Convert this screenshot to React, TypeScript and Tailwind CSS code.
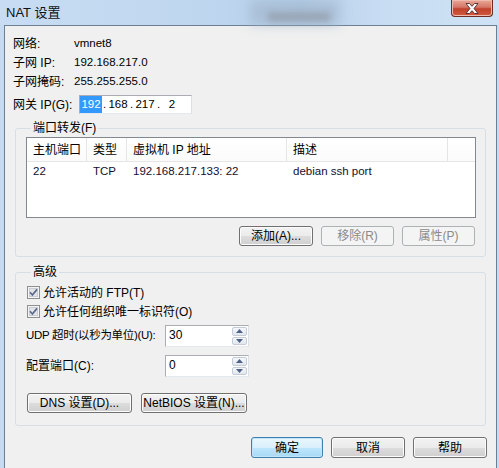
import React from "react";

const font = "font-['Liberation_Sans','Noto_Sans_CJK_SC',sans-serif]";

const WinButton = ({
  label,
  width,
  disabled = false,
  primary = false,
  height = "h-[20px]",
}: {
  label: string;
  width: string;
  disabled?: boolean;
  primary?: boolean;
  height?: string;
}) => {
  let cls =
    "flex items-center justify-center rounded-[3px] border text-[12px] leading-none whitespace-nowrap " +
    width +
    " " +
    height;
  if (disabled) {
    cls += " border-[#adb2b5] bg-[#f4f4f4] text-[#8a8a8a]";
  } else if (primary) {
    cls +=
      " border-[#3c7fb1] bg-[linear-gradient(#eaf6fd_0%,#d9f0fc_50%,#bee6fd_51%,#a7d9f5_100%)] text-black shadow-[inset_0_0_0_1px_#c4e5f6]";
  } else {
    cls +=
      " border-[#707070] bg-[linear-gradient(#f2f2f2_0%,#ebebeb_50%,#dddddd_51%,#cfcfcf_100%)] text-black shadow-[inset_0_0_0_1px_#fcfcfc]";
  }
  return <div className={cls}>{label}</div>;
};

const CheckBox = () => (
  <svg width="13" height="13" viewBox="0 0 13 13">
    <rect x="0.5" y="0.5" width="12" height="12" fill="#f4f4f4" stroke="#8e8f8f" />
    <rect x="2.5" y="2.5" width="8" height="8" fill="#e2e4e8" stroke="#c9ccd2" />
    <path d="M3 6.3 L5.4 9 L10 3.4" fill="none" stroke="#5a6a8c" strokeWidth="1.7" />
  </svg>
);

const SpinInput = ({ value }: { value: string }) => (
  <div className="flex h-[22px] w-[84px] border border-[#abadb3] border-r-[#dbdfe6] border-b-[#e3e9ef] bg-white">
    <div className="flex-1 pl-[3px] pt-[2px] text-[12px] leading-[14px]">{value}</div>
    <div className="flex w-[17px] flex-col gap-[1px] p-[1px]">
      <div className="flex flex-1 items-center justify-center rounded-[2px] border border-[#c5ccd6] bg-[linear-gradient(#f5f8fb,#e1e7ef)]">
        <svg width="7" height="4" viewBox="0 0 7 4">
          <path d="M0 4 L3.5 0 L7 4 Z" fill="#4d6185" />
        </svg>
      </div>
      <div className="flex flex-1 items-center justify-center rounded-[2px] border border-[#c5ccd6] bg-[linear-gradient(#f5f8fb,#e1e7ef)]">
        <svg width="7" height="4" viewBox="0 0 7 4">
          <path d="M0 0 L3.5 4 L7 0 Z" fill="#4d6185" />
        </svg>
      </div>
    </div>
  </div>
);

const InfoRow = ({ label, value }: { label: string; value: string }) => (
  <div className="flex h-[19px] items-center">
    <div className="w-[61px] text-[12px]">{label}</div>
    <div className="text-[11.5px]">{value}</div>
  </div>
);

export default function App() {
  return (
    <div
      className={
        "relative flex h-[468px] w-[499px] flex-col overflow-hidden bg-[#c6dbf1] text-black " +
        font
      }
    >
      {/* title bar */}
      <div className="relative flex h-[25px] items-center bg-[linear-gradient(90deg,#c8ddf3_0%,#bdd5ee_45%,#b5cfea_60%,#c7dcf2_75%,#cfe2f5_100%)] pl-[6px]">
        <div className="absolute left-[250px] top-0 h-[25px] w-[90px] bg-[#9fb3c9] opacity-60 blur-[6px]" />
        <div className="absolute left-[268px] top-[12px] h-[10px] w-[62px] bg-[#8a8f98] opacity-50 blur-[3px]" />
        <span className="relative text-[13px] leading-none text-[#111]">NAT 设置</span>
        <div className="absolute right-[6px] top-0 flex h-[17px] w-[42px] items-center justify-center rounded-b-[4px] border border-t-0 border-[#6b2d25] bg-[linear-gradient(#eaa898_0%,#d47767_45%,#c2412c_55%,#cf5b3f_100%)] shadow-[inset_0_0_0_1px_#eebcae]">
          <svg width="14" height="11" viewBox="0 0 14 11">
            <path
              d="M1 0.5 H4.5 L7 3.3 L9.5 0.5 H13 L9 5.5 L13 10.5 H9.5 L7 7.7 L4.5 10.5 H1 L5 5.5 Z"
              fill="#ffffff"
              stroke="#4a2a2a"
              strokeWidth="0.9"
              strokeLinejoin="round"
            />
          </svg>
        </div>
      </div>

      {/* client area */}
      <div className="ml-[4px] mr-[2px] flex flex-1 flex-col border border-b-0 border-[#6d7f93] bg-[#f0f0f0] px-[8px] pt-[8px] text-[12px]">
        <InfoRow label="网络:" value="vmnet8" />
        <InfoRow label="子网 IP:" value="192.168.217.0" />
        <InfoRow label="子网掩码:" value="255.255.255.0" />

        <div className="mt-[4px] flex h-[19px] items-center">
          <div className="w-[66px]">网关 IP(G):</div>
          <div className="flex h-[19px] w-[113px] items-center border border-[#abadb3] border-r-[#dbdfe6] border-b-[#e3e9ef] bg-white text-[11.5px]">
            <span className="flex w-[22px] justify-center">
              <span className="bg-[#3399ff] px-[1px] text-white">192</span>
            </span>
            <span className="w-[5px] text-center">.</span>
            <span className="w-[22px] text-center">168</span>
            <span className="w-[5px] text-center">.</span>
            <span className="w-[22px] text-center">217</span>
            <span className="w-[5px] text-center">.</span>
            <span className="w-[22px] text-center">2</span>
          </div>
        </div>

        {/* port forwarding */}
        <fieldset className="mx-[2px] mt-[6px] rounded-[3px] border border-[#d5dfe5] pb-[10px] pl-[10px] pr-[9px]">
          <legend className="ml-[5px] px-[2px] text-[12px] leading-[16px]">端口转发(F)</legend>
          <div className="mt-[1px] flex h-[81px] flex-col border border-[#828790] bg-white">
            <div className="flex h-[24px] border-b border-[#e5e5e5] bg-[linear-gradient(#ffffff,#fbfbfb)]">
              <div className="flex w-[60px] items-center border-r border-[#e5e5e5] pl-[6px]">主机端口</div>
              <div className="flex w-[40px] items-center border-r border-[#e5e5e5] pl-[6px]">类型</div>
              <div className="flex w-[160px] items-center border-r border-[#e5e5e5] pl-[6px]">虚拟机 IP 地址</div>
              <div className="flex w-[161px] items-center border-r border-[#e5e5e5] pl-[6px]">描述</div>
              <div className="flex-1" />
            </div>
            <div className="flex h-[19px] items-center text-[11.5px] text-[#101030]">
              <div className="w-[60px] pl-[6px]">22</div>
              <div className="w-[40px] pl-[6px]">TCP</div>
              <div className="w-[160px] pl-[6px]">192.168.217.133: 22</div>
              <div className="w-[161px] pl-[6px]">debian ssh port</div>
            </div>
          </div>
          <div className="mt-[8px] flex justify-end gap-[8px] pr-[1px]">
            <WinButton label="添加(A)..." width="w-[74px]" />
            <WinButton label="移除(R)" width="w-[73px]" disabled />
            <WinButton label="属性(P)" width="w-[73px]" disabled />
          </div>
        </fieldset>

        {/* advanced */}
        <fieldset className="mx-[2px] mt-[7px] rounded-[3px] border border-[#d5dfe5] pb-[12px] pl-[10px]">
          <legend className="ml-[5px] px-[2px] text-[12px] leading-[16px]">高级</legend>
          <div className="mt-[3px] flex h-[19px] items-center gap-[3px] pl-[1px]">
            <CheckBox />
            <span>允许活动的 FTP(T)</span>
          </div>
          <div className="flex h-[19px] items-center gap-[3px] pl-[1px]">
            <CheckBox />
            <span>允许任何组织唯一标识符(O)</span>
          </div>
          <div className="mt-[4px] flex items-center">
            <div className="w-[139px] whitespace-nowrap text-[11.5px] tracking-[-0.3px]">UDP 超时(以秒为单位)(U):</div>
            <SpinInput value="30" />
          </div>
          <div className="mt-[8px] flex items-center">
            <div className="w-[139px] whitespace-nowrap">配置端口(C):</div>
            <SpinInput value="0" />
          </div>
          <div className="mt-[16px] flex gap-[9px] pl-[1px]">
            <WinButton label="DNS 设置(D)..." width="w-[105px]" />
            <WinButton label="NetBIOS 设置(N)..." width="w-[106px]" />
          </div>
        </fieldset>

        <div className="mt-[11px] flex justify-end gap-[8px] pr-[1px]">
          <WinButton label="确定" width="w-[72px]" height="h-[21px]" primary />
          <WinButton label="取消" width="w-[74px]" height="h-[21px]" />
          <WinButton label="帮助" width="w-[74px]" height="h-[21px]" />
        </div>
      </div>
    </div>
  );
}
